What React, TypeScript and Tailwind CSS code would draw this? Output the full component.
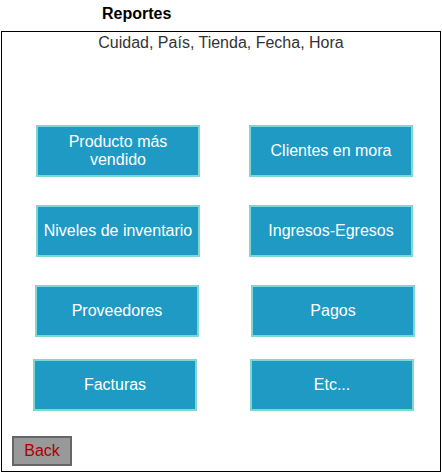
const font = { fontFamily: '"Liberation Sans", Arial, sans-serif' };

function ReportButton({ label, className }: { label: string; className: string }) {
  return (
    <button
      className={`flex h-[52px] w-[164px] items-center justify-center border-2 border-[#7fd8d0] bg-[#1f9ac4] px-1 text-center text-[16px] leading-[18px] text-white ${className}`}
    >
      {label}
    </button>
  );
}

export default function App() {
  return (
    <div className="h-[472px] w-[442px] bg-white" style={font}>
      <div className="flex h-[31px] items-center pl-[102px] pb-[4px] text-[16px] font-bold text-black">
        Reportes
      </div>
      <div className="ml-[1px] flex h-[441px] w-[440px] flex-col border border-black">
        <div className="mt-[2px] h-[18px] text-center text-[16px] leading-[18px] text-[#333]">
          Cuidad, País, Tienda, Fecha, Hora
        </div>
        <div className="mt-[73px] flex">
          <ReportButton label="Producto más vendido" className="ml-[34px]" />
          <ReportButton label="Clientes en mora" className="ml-[49px]" />
        </div>
        <div className="mt-[28px] flex">
          <ReportButton label="Niveles de inventario" className="ml-[34px]" />
          <ReportButton label="Ingresos-Egresos" className="ml-[49px]" />
        </div>
        <div className="mt-[28px] flex">
          <ReportButton label="Proveedores" className="ml-[33px]" />
          <ReportButton label="Pagos" className="ml-[52px]" />
        </div>
        <div className="mt-[22px] flex">
          <ReportButton label="Facturas" className="ml-[31px]" />
          <ReportButton label="Etc..." className="ml-[53px]" />
        </div>
        <div className="mt-[25px] pl-[10px]">
          <button className="flex h-[30px] w-[60px] items-center justify-center border-2 border-[#666] bg-[#999] text-[16px] text-[#a00]">
            Back
          </button>
        </div>
      </div>
    </div>
  );
}
